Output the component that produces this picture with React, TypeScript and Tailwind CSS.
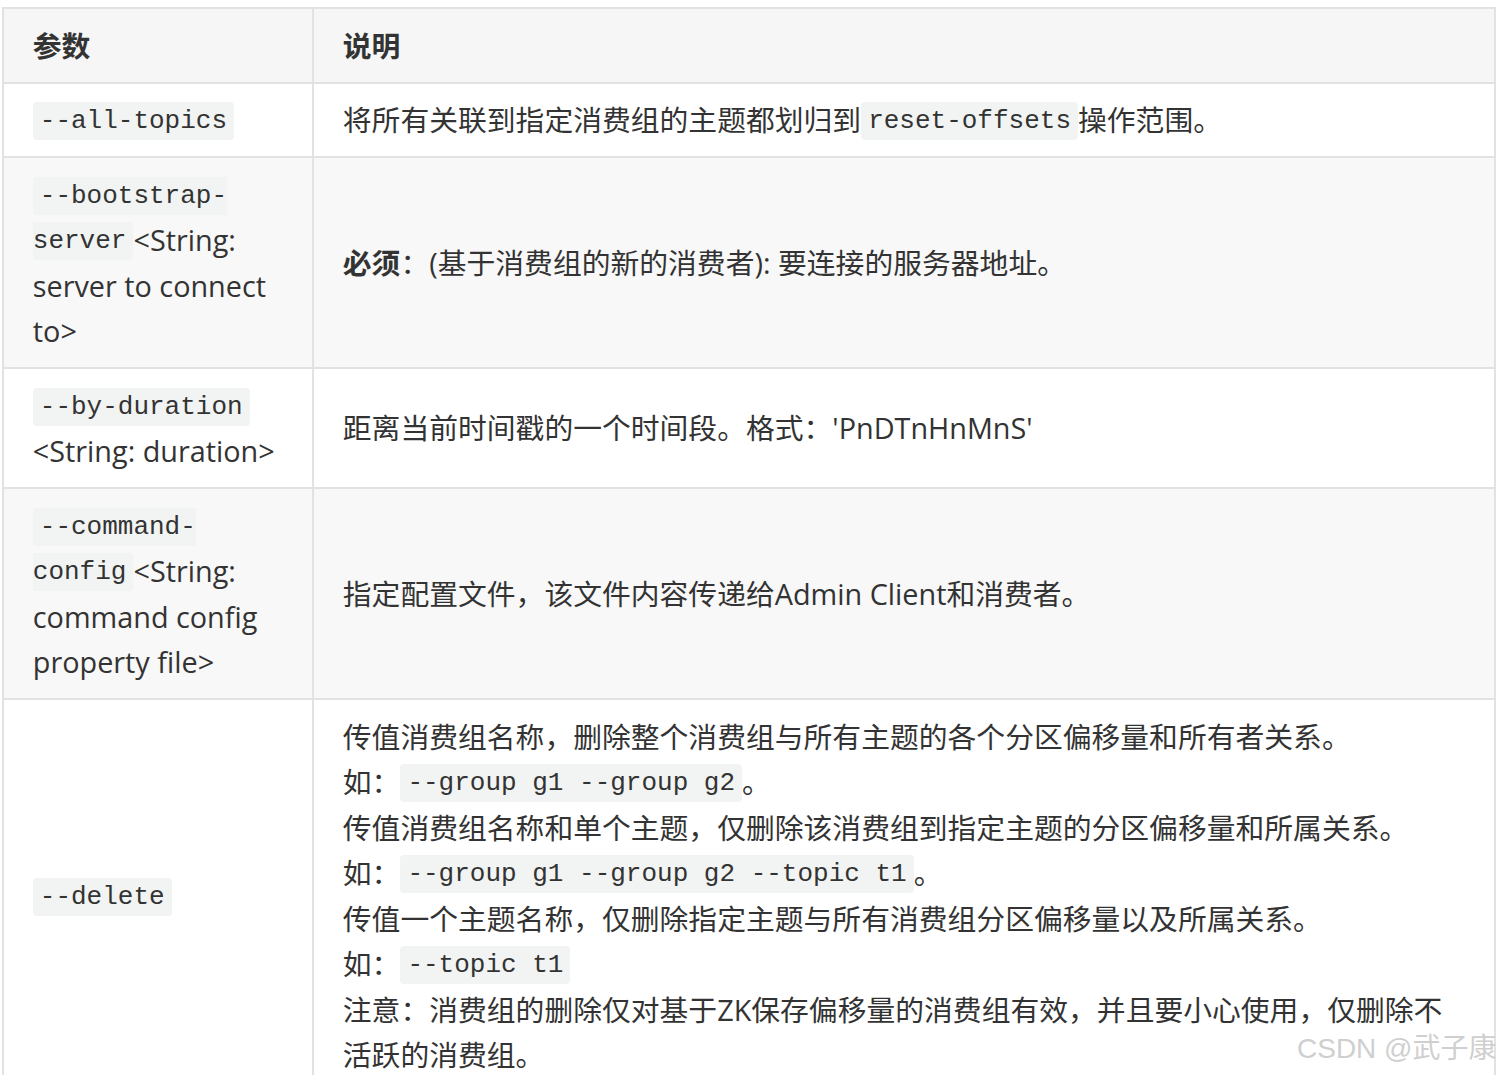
const cell = 'border-2 border-[#e2e2e2] px-[28.8px] py-[13.5px] align-middle';
const code = 'font-["Liberation_Mono",monospace] text-[26px] leading-[20px] align-[3px] bg-[#f2f3f3] rounded-[4px] px-[7px] py-[4px]';

export default function App() {
  return (
    <div className="relative h-[1075px] w-[1500px] overflow-hidden bg-white pt-[7px] pl-[2px] text-[#333]">
      <table
        className="w-[1494px] border-collapse text-[28.8px] leading-[45.5px]"
        style={{ fontFamily: '"Open Sans", "Noto Sans CJK SC", sans-serif' }}
      >
        <thead>
          <tr className="bg-[#f6f6f6]">
            <th className={`${cell} w-[310px] text-left font-bold`}>参数</th>
            <th className={`${cell} text-left font-bold`}>说明</th>
          </tr>
        </thead>
        <tbody>
          <tr className="bg-white">
            <td className={cell}>
              <code className={code}>--all-topics</code>
            </td>
            <td className={cell}>
              将所有关联到指定消费组的主题都划归到<code className={code}>reset-offsets</code>操作范围。
            </td>
          </tr>
          <tr className="bg-[#f8f8f8]">
            <td className={cell}>
              <code className={code}>--bootstrap-server</code>&lt;String: server to connect to&gt;
            </td>
            <td className={cell}>
              <strong>必须</strong>：(基于消费组的新的消费者): 要连接的服务器地址。
            </td>
          </tr>
          <tr className="bg-white">
            <td className={cell}>
              <code className={code}>--by-duration</code> &lt;String: duration&gt;
            </td>
            <td className={cell}>距离当前时间戳的一个时间段。格式：'PnDTnHnMnS'</td>
          </tr>
          <tr className="bg-[#f8f8f8]">
            <td className={cell}>
              <code className={code}>--command-config</code>&lt;String: command config property file&gt;
            </td>
            <td className={cell}>指定配置文件，该文件内容传递给Admin Client和消费者。</td>
          </tr>
          <tr className="bg-white">
            <td className={cell}>
              <code className={code}>--delete</code>
            </td>
            <td className={cell}>
              传值消费组名称，删除整个消费组与所有主题的各个分区偏移量和所有者关系。
              <br />
              如：<code className={code}>--group g1 --group g2</code>。
              <br />
              传值消费组名称和单个主题，仅删除该消费组到指定主题的分区偏移量和所属关系。
              <br />
              如：<code className={code}>--group g1 --group g2 --topic t1</code>。
              <br />
              传值一个主题名称，仅删除指定主题与所有消费组分区偏移量以及所属关系。
              <br />
              如：<code className={code}>--topic t1</code>
              <br />
              注意：消费组的删除仅对基于ZK保存偏移量的消费组有效，并且要小心使用，仅删除不活跃的消费组。
            </td>
          </tr>
        </tbody>
      </table>

      {/* 水印 */}
      <div className="absolute left-[1297px] top-[1028px] whitespace-nowrap font-['Liberation_Sans','Noto_Sans_CJK_SC',sans-serif] text-[28px] text-[#cfcfcf]">
        CSDN @武子康
      </div>
    </div>
  );
}
